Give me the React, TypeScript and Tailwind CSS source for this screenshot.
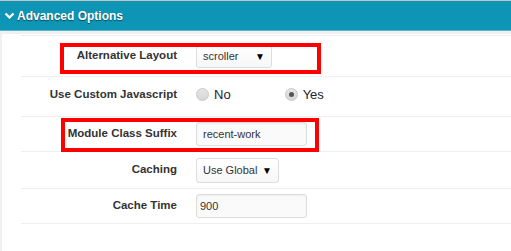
import React from "react";

const font = { fontFamily: '"Liberation Sans", Arial, sans-serif' };

function Row({ h, label, children }: { h: string; label: string; children: React.ReactNode }) {
  return (
    <div className={`flex items-center border-b border-[#eeeeee] ml-[19px] ${h}`}>
      <div className="w-[156px] whitespace-nowrap text-right text-[11.5px] font-bold text-[#333333]">{label}</div>
      <div className="ml-[19px] flex items-center">{children}</div>
    </div>
  );
}

function Select({ value, w, h }: { value: string; w: string; h: string }) {
  return (
    <div className={`flex items-center justify-between rounded-[3px] border border-[#dddddd] bg-gradient-to-b from-white to-[#f7f7f7] pl-[6px] pr-[6px] ${w} ${h}`}>
      <span className="whitespace-nowrap text-[11px] text-[#333333]">{value}</span>
      <span className="text-[10px] text-black">▼</span>
    </div>
  );
}

function Input({ value, h, pl }: { value: string; h: string; pl: string }) {
  return (
    <div className={`flex items-center rounded-[3px] border border-[#dddddd] bg-[#fafafa] shadow-[inset_0_1px_2px_rgba(0,0,0,0.06)] w-[111px] ${h} ${pl}`}>
      <span className="text-[11px] text-[#333333]">{value}</span>
    </div>
  );
}

function Radio({ checked }: { checked?: boolean }) {
  return (
    <span className="flex h-[13px] w-[13px] items-center justify-center rounded-full border border-[#c8c8c8] bg-gradient-to-b from-[#e6e6e6] to-[#d6d6d6]">
      {checked && <span className="h-[5px] w-[5px] rounded-full bg-[#555555]" />}
    </span>
  );
}

export default function App() {
  return (
    <div className="relative h-[251px] w-[511px] overflow-hidden bg-white" style={font}>
      <div className="h-[1px] bg-[#c4c4c4]" />
      <div className="flex h-[30px] items-center bg-[#0e94b4] border-b border-[#5bb5cc]">
        <svg width="11" height="8" viewBox="0 0 11 8" className="ml-[4px] mt-[1px]">
          <path d="M1.5 1.5 L5.5 5.5 L9.5 1.5" stroke="white" strokeWidth="2.2" fill="none" />
        </svg>
        <span className="ml-[2px] text-[12px] font-bold text-white [text-shadow:0_1px_1px_rgba(0,0,0,0.5)]">Advanced Options</span>
      </div>
      <div className="h-[3px] bg-[#f0f0f0]" />
      <div className="h-[220px] border-l-[2px] border-[#f0f0f0]">
        <div className="h-[2px] border-b border-[#eeeeee] ml-[19px]" />
        <Row h="h-[41px]" label="Alternative Layout">
          <Select value="scroller" w="w-[76px]" h="h-[23px]" />
        </Row>
        <Row h="h-[40px] pb-[4px]" label="Use Custom Javascript">
          <div className="flex items-center">
            <Radio />
            <span className="ml-[5px] text-[13px] text-[#222233]">No</span>
            <span className="ml-[54px]"><Radio checked /></span>
            <span className="ml-[5px] text-[13px] text-[#222233]">Yes</span>
          </div>
        </Row>
        <Row h="h-[35px]" label="Module Class Suffix">
          <Input value="recent-work" h="h-[24px]" pl="pl-[6px]" />
        </Row>
        <Row h="h-[37px]" label="Caching">
          <Select value="Use Global" w="w-[83px]" h="h-[25px]" />
        </Row>
        <Row h="h-[35px]" label="Cache Time">
          <Input value="900" h="h-[24px]" pl="pl-[3px]" />
        </Row>
      </div>
      <div className="absolute left-[60px] top-[43px] h-[31px] w-[261px] border-[4px] border-[#ff0000]" />
      <div className="absolute left-[61px] top-[118px] h-[34px] w-[258px] border-[4px] border-[#ff0000]" />
    </div>
  );
}
